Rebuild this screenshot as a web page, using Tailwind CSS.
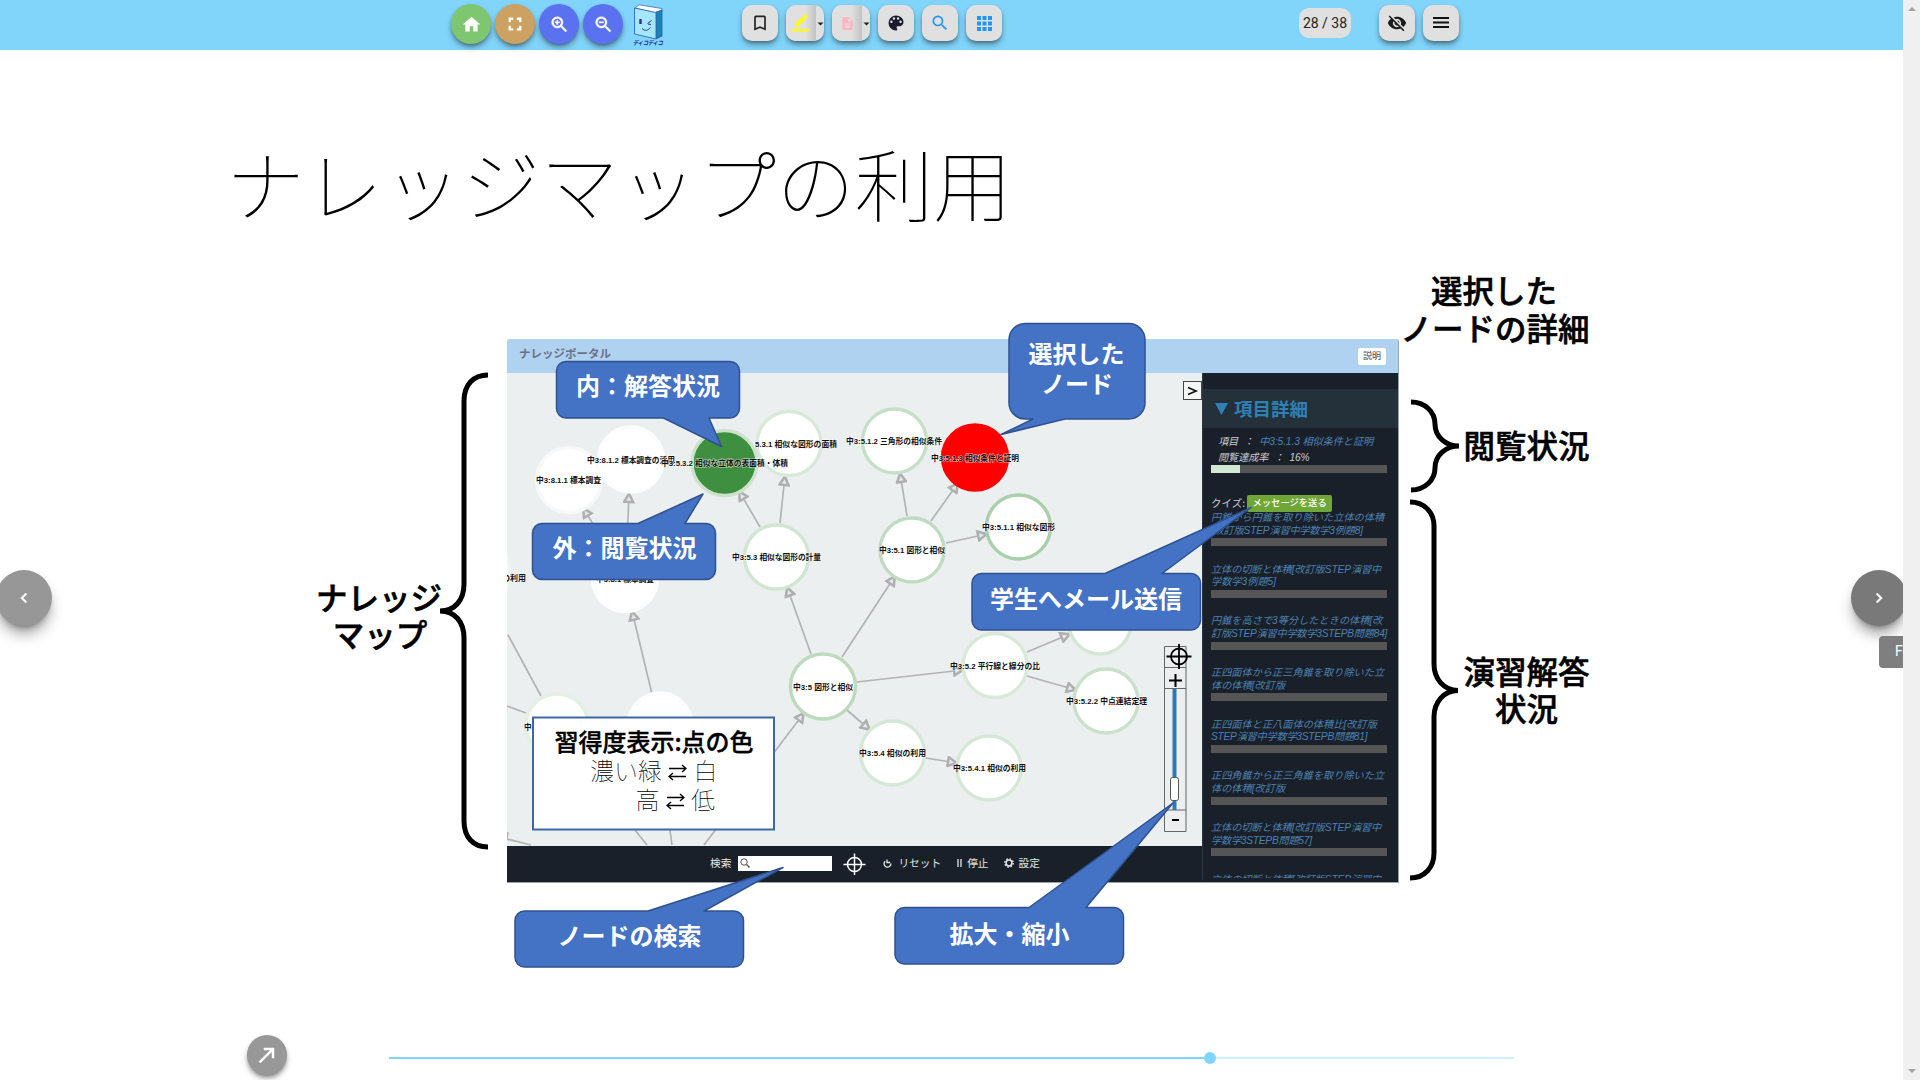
<!DOCTYPE html>
<html lang="ja">
<head>
<meta charset="utf-8">
<title>ナレッジマップの利用</title>
<script src="https://cdn.jsdelivr.net/npm/@tailwindcss/browser@4"></script>
</head>
<body class="h-screen overflow-hidden bg-white font-['Noto_Sans_CJK_JP',sans-serif]">
<div class="flex h-[1080px] w-[1920px]">
<div class="relative flex h-full w-[1903px] flex-col overflow-hidden">

<!-- toolbar -->
<header class="flex h-[50px] shrink-0 items-start bg-[#81d4fa] pl-[451px] pt-1">
  <div class="flex gap-1 text-white">
    <span class="grid size-10 place-items-center rounded-full bg-[#7fc671] shadow-md shadow-black/40"><svg class="size-[21px]" viewBox="0 0 24 24" fill="currentColor"><path d="M10 20v-6h4v6h5v-8h3L12 3 2 12h3v8z"/></svg></span>
    <span class="grid size-10 place-items-center rounded-full bg-[#cca162] shadow-md shadow-black/40"><svg class="size-[22px]" viewBox="0 0 24 24" fill="currentColor"><path d="M5 5h5v2.500H7.500V10H5zM14 5h5v5h-2.500V7.500H14zM5 14h2.500v2.500H10V19H5zM16.500 14H19v5h-5v-2.500h2.500z"/></svg></span>
    <span class="grid size-10 place-items-center rounded-full bg-[#5a72f0] shadow-md shadow-black/40"><svg class="size-[21px]" viewBox="0 0 24 24" fill="currentColor"><path d="M15.500 14h-.79l-.28-.27A6.471 6.471 0 0 0 16 9.500 6.500 6.500 0 1 0 9.500 16c1.610 0 3.090-.59 4.230-1.570l.27.28v.79l5 4.990L20.490 19l-4.990-5zm-6 0C7.010 14 5 11.990 5 9.500S7.010 5 9.500 5 14 7.010 14 9.500 11.990 14 9.500 14zM10.200 7H8.800v1.800H7v1.400h1.800V12h1.400v-1.800H12V8.800h-1.800z" stroke="currentColor" stroke-width=".5"/></svg></span>
    <span class="grid size-10 place-items-center rounded-full bg-[#5a72f0] shadow-md shadow-black/40"><svg class="size-[21px]" viewBox="0 0 24 24" fill="currentColor"><path d="M15.500 14h-.79l-.28-.27A6.471 6.471 0 0 0 16 9.500 6.500 6.500 0 1 0 9.500 16c1.610 0 3.090-.59 4.230-1.570l.27.28v.79l5 4.990L20.490 19l-4.990-5zm-6 0C7.010 14 5 11.990 5 9.500S7.010 5 9.500 5 14 7.010 14 9.500 11.990 14 9.500 14zM7 8.800h5v1.400H7z" stroke="currentColor" stroke-width=".5"/></svg></span>
  </div>
  <svg class="ml-2.5 h-[43px] w-8" viewBox="0 0 32 43">
    <path d="M2 4 6 .8 29 4.500v3L23 9z" fill="#fff" stroke="#3b6fc0" stroke-width=".8"/>
    <path d="M23 8l6-2v26l-6 3z" fill="#1784b4" stroke="#2b5fb0" stroke-width=".8"/>
    <path d="M1.500 4 23 8.500V35L1.500 30z" fill="#a5e6f8" stroke="#3565bd" stroke-width=".9"/>
    <path d="M7.500 15v5" stroke="#25318c" stroke-width="2.400"/><path d="M14.500 19.500l4-3M9 24.500c3 3 6 2 8.500-1M15 20l3 .5" fill="none" stroke="#25318c"/>
    <text x="0" y="41" font-size="6" font-weight="900" font-style="italic" fill="#2b3aa0" textLength="30" lengthAdjust="spacingAndGlyphs">ディコディコ</text>
  </svg>
  <div class="ml-[77px] mt-px flex gap-2">
    <span class="grid size-9 place-items-center rounded-[10px] bg-[#e0e0e0] shadow-md shadow-black/40"><svg class="size-5" viewBox="0 0 24 24" fill="#222"><path d="M17 3H7a2 2 0 0 0-2 2v16l7-3 7 3V5a2 2 0 0 0-2-2zm0 15-5-2.180L7 18V5h10z"/></svg></span>
    <span class="flex h-9 w-[38px] overflow-hidden rounded-[10px] bg-[#e0e0e0] shadow-md shadow-black/40"><span class="grid w-[30px] place-items-center bg-linear-to-r from-[#e0e0e0] from-65% to-[#c2c2c2]"><svg class="size-[18px]" viewBox="0 0 24 24" fill="#ff0"><path d="M17.750 7 14 3.250l-10 10V17h3.750zm2.960-2.960a1 1 0 0 0 0-1.410L18.370.29a1 1 0 0 0-1.410 0L15 2.250 18.750 6zM0 20h24v3H0z"/></svg></span><svg class="mt-[17px] h-1 w-2" viewBox="0 0 8 4"><path d="M1.500.5h6l-3 3z" fill="#222"/></svg></span>
    <span class="flex h-9 w-[38px] overflow-hidden rounded-[10px] bg-[#e0e0e0] shadow-md shadow-black/40"><span class="grid w-[30px] place-items-center bg-linear-to-r from-[#e0e0e0] from-65% to-[#c2c2c2]"><svg class="h-[13px] w-[11px]" viewBox="4 2 16 20" fill="#ffb6c1"><path d="M14 2H6a2 2 0 0 0-2 2v16c0 1.100.9 2 2 2h12a2 2 0 0 0 2-2V8zm2 16H8v-2h8zm0-4H8v-2h8zm-3-5V3.500L18.500 9z"/></svg></span><svg class="mt-[17px] h-1 w-2" viewBox="0 0 8 4"><path d="M1.500.5h6l-3 3z" fill="#222"/></svg></span>
    <span class="grid size-9 place-items-center rounded-[10px] bg-[#e0e0e0] shadow-md shadow-black/40"><svg class="size-5" viewBox="0 0 24 24" fill="#1c1b2e"><path d="M12 3a9 9 0 0 0 0 18c.83 0 1.500-.67 1.500-1.500 0-.39-.15-.74-.39-1.010-.23-.26-.38-.61-.38-.99 0-.83.67-1.500 1.500-1.500H16a5 5 0 0 0 5-5c0-4.420-4.030-8-9-8zm-5.500 9a1.500 1.500 0 1 1 0-3 1.500 1.500 0 0 1 0 3zm3-4a1.500 1.500 0 1 1 0-3 1.500 1.500 0 0 1 0 3zm5 0a1.500 1.500 0 1 1 0-3 1.500 1.500 0 0 1 0 3zm3 4a1.500 1.500 0 1 1 0-3 1.500 1.500 0 0 1 0 3z"/></svg></span>
    <span class="grid size-9 place-items-center rounded-[10px] bg-[#e0e0e0] shadow-md shadow-black/40"><svg class="size-5" viewBox="0 0 24 24" fill="#2196f3"><path d="M15.500 14h-.79l-.28-.27A6.471 6.471 0 0 0 16 9.500 6.500 6.500 0 1 0 9.500 16c1.610 0 3.090-.59 4.230-1.570l.27.28v.79l5 4.990L20.490 19l-4.990-5zm-6 0C7.010 14 5 11.990 5 9.500S7.010 5 9.500 5 14 7.010 14 9.500 11.990 14 9.500 14z"/></svg></span>
    <span class="grid size-9 place-items-center rounded-[10px] bg-[#e0e0e0] shadow-md shadow-black/40"><svg class="size-[15px]" viewBox="0 0 15 15" fill="#2196f3"><path d="M0 0h4v4H0zM5.500 0h4v4h-4zM11 0h4v4h-4zM0 5.500h4v4H0zM5.500 5.500h4v4h-4zM11 5.500h4v4h-4zM0 11h4v4H0zM5.500 11h4v4h-4zM11 11h4v4h-4z"/></svg></span>
  </div>
  <span class="ml-[297px] mt-1 grid h-[30px] w-[52px] place-items-center rounded-[10px] bg-[#e0e0e0] font-['Roboto',sans-serif] text-sm text-[#222]">28 / 38</span>
  <div class="ml-7 mt-px flex gap-2">
    <span class="grid size-9 place-items-center rounded-[10px] bg-[#e0e0e0] shadow-md shadow-black/40"><svg class="size-5" viewBox="0 0 24 24" fill="#1a1a1a"><path d="M12 7a5 5 0 0 1 4.640 6.830l2.920 2.920A11.800 11.800 0 0 0 22.990 12C21.260 7.610 16.990 4.500 11.990 4.500c-1.400 0-2.740.25-3.980.7l2.160 2.160A4.900 4.900 0 0 1 12 7zM2 4.270l2.740 2.740A11.800 11.800 0 0 0 1 12c1.730 4.390 6 7.500 11 7.500 1.550 0 3.030-.3 4.380-.84l.42.42L19.730 22 21 20.730 3.270 3zM7.530 9.800l1.550 1.550A3 3 0 0 0 12 15c.22 0 .44-.03.65-.08l1.550 1.550A5 5 0 0 1 7.530 9.800zm4.310-.78 3.150 3.150.02-.16a3 3 0 0 0-3-3z"/></svg></span>
    <span class="grid size-9 place-items-center rounded-[10px] bg-[#e0e0e0] shadow-md shadow-black/40"><svg class="h-3 w-4" viewBox="0 0 16 12"><path d="M0 1h16M0 5.500h16M0 10h16" stroke="#111" stroke-width="2"/></svg></span>
  </div>
</header>

<main class="relative flex-1">
  <h1 class="pl-[226px] pt-[75px] text-[78.6px] leading-[114px] font-thin text-black">ナレッジマップの利用</h1>

  <!-- knowledge portal window -->
  <section class="absolute left-[507px] top-[289px] flex h-[544px] w-[892px] flex-col overflow-hidden rounded-t-[3px] border-r border-b border-[#9aa3aa] bg-[#ebefef]">
    <div class="flex h-[34px] shrink-0 items-center justify-between bg-[#aed2f0] pl-3 pr-3">
      <span class="-mt-1 text-[11.500px] font-bold text-[#6d7089]">ナレッジポータル</span>
      <span class="grid h-[17px] w-7 place-items-center rounded-xs bg-white text-[9px] text-[#444]">説明</span>
    </div>
    <div class="flex min-h-0 flex-1">
      <div class="flex w-[695px] flex-col">
        <svg class="h-[473px] w-[695px]" viewBox="507 373 695 473">
          <defs><marker id="tip" viewBox="0 0 12 12" refX="10.500" refY="6" markerWidth="12" markerHeight="12" markerUnits="userSpaceOnUse" orient="auto"><path d="M1.500 1.500 10 6l-8.500 4.500z" fill="#e4e8e8" stroke="#afafaf" stroke-width="2.500"/></marker></defs>
          <g id="edges" fill="none" stroke="#b3b3b3" stroke-width="1.700"></g>
          <g id="nodes"></g>
          <g id="names" font-family="Liberation Sans, Noto Sans CJK JP, sans-serif" font-size="7.900" font-weight="700" fill="#111" stroke="#fff" stroke-opacity=".65" stroke-width="1.200" paint-order="stroke" text-anchor="middle"></g>
          <rect x="1183.500" y="381.500" width="18" height="18" fill="#f4f6f6" stroke="#444"/><path d="M1188 387.500l8 3.500-8 3.500" fill="none" stroke="#111" stroke-width="1.700"/>
          <g fill="none" stroke="#666"><path d="M1164.500 646.500h21.500v185h-21.500zM1164.500 667.500h21.500M1164.500 688.500h21.500M1164.500 810h21.500"/></g>
          <path d="M1174.500 689v121" stroke="#2f79b3" stroke-width="4"/>
          <rect x="1170.500" y="777.500" width="8" height="23" rx="2" fill="#fff" stroke="#555"/>
          <g fill="none" stroke="#000" stroke-width="1.800"><circle cx="1179" cy="656.500" r="8"/><path d="M1166.500 656.500h25M1179 644v25"/><path d="M1169 680.500h13M1175.500 674v13M1172 820h7" stroke-width="2"/></g>
        </svg>
        <div class="flex flex-1 items-center bg-[#1a2029] pb-0.5 pl-[203px] text-[10.700px] leading-none text-[#e4e6e8]">
          <span>検索</span>
          <span class="ml-[7px] flex h-[15px] w-[94px] items-center bg-white pl-0.5"><svg class="size-[10px]" viewBox="0 0 10 10" fill="none" stroke="#555"><circle cx="4" cy="4" r="3.200"/><path d="M6.500 6.500 9.500 9.500" stroke-width="1.400"/></svg></span>
          <svg class="ml-[11px] size-[23px]" viewBox="0 0 23 23" fill="none" stroke="#fff" stroke-width="1.500"><circle cx="11.500" cy="12.500" r="7"/><path d="M.5 12.500h22M11.500 1.500v21.500"/></svg>
          <svg class="ml-[17px] size-[9px]" viewBox="0 0 9 9" fill="none" stroke="#e4e6e8" stroke-width="1.300"><path d="M2.200 2.200A3.400 3.400 0 1 0 7.900 4.600M4 .5v3h3.200"/></svg>
          <span class="ml-1.5">リセット</span>
          <svg class="ml-4 h-2 w-[5px]" viewBox="0 0 5 8"><path d="M1 0v8M4 0v8" stroke="#c9ccd0" stroke-width="1.500"/></svg>
          <span class="ml-[5px]">停止</span>
          <svg class="ml-[15px] size-[10px]" viewBox="0 0 10 10" fill="none" stroke="#e4e6e8"><circle cx="5" cy="5" r="2.900" stroke-width="1.500"/><circle cx="5" cy="5" r="4.200" stroke-width="1.400" stroke-dasharray="1.600 1.700"/></svg>
          <span class="ml-[5px]">設定</span>
        </div>
      </div>
      <aside class="flex min-w-0 flex-1 flex-col overflow-hidden border-b-4 border-l border-b-[#1a2029] border-l-[#26384a] bg-[#1a2029] pt-4">
        <h2 class="flex h-[39px] shrink-0 items-center bg-[#24313b] pl-3 text-[18.500px] leading-none font-bold text-[#2f80b5]"><svg class="mr-1.5 h-3 w-[13px]" viewBox="0 0 13 12"><path d="M0 0h13L6.500 12z" fill="#2f80b5"/></svg>項目詳細</h2>
        <div class="mt-1.5 flex h-4 shrink-0 items-center pl-[15px] font-['Liberation_Sans','Noto_Sans_CJK_JP',sans-serif] text-[10.200px] tracking-[-0.1px] whitespace-pre text-[#c9ccd0] italic">項目  ：  <span class="text-[#4c82b5]">中3:5.1.3 相似条件と証明</span></div>
        <div class="flex h-4 shrink-0 items-center pl-[15px] font-['Liberation_Sans','Noto_Sans_CJK_JP',sans-serif] text-[10.200px] tracking-[-0.1px] whitespace-pre text-[#c9ccd0] italic">閲覧達成率  ：  16%</div>
        <div class="-mt-px ml-2 h-2 w-44 shrink-0 bg-[#555]"><div class="h-full w-[29px] bg-[#d3e8d3]"></div></div>
        <div class="mt-[21px] ml-2 flex h-[18px] shrink-0 items-center gap-0.5 text-[10.500px] leading-none text-[#c9ccd0]">クイズ:<span class="grid h-[17px] w-[85px] place-items-center rounded-xs bg-[#6fa637] text-[9.300px] font-medium text-white">メッセージを送る</span></div>
        <div class="ml-2 flex shrink-0 flex-col gap-[17px] font-['Liberation_Sans','Noto_Sans_CJK_JP',sans-serif] text-[10.200px] leading-[12.600px] whitespace-nowrap text-[#4c80b0] italic">
          <div class="h-[34.700px]">円錐から円錐を取り除いた立体の体積<br><span class="tracking-[-0.2px]">[改訂版STEP演習中学数学3例題8]</span><div class="mt-px h-2 w-44 bg-[#555]"></div></div>
          <div class="h-[34.700px]"><span class="tracking-[-0.1px]">立体の切断と体積[改訂版STEP演習中</span><br>学数学3例題5]<div class="mt-px h-2 w-44 bg-[#555]"></div></div>
          <div class="h-[34.700px]">円錐を高さで3等分したときの体積[改<br><span class="tracking-[-0.24px]">訂版STEP演習中学数学3STEPB問題84]</span><div class="mt-px h-2 w-44 bg-[#555]"></div></div>
          <div class="h-[34.700px]">正四面体から正三角錐を取り除いた立<br>体の体積[改訂版<div class="mt-px h-2 w-44 bg-[#555]"></div></div>
          <div class="h-[34.700px]">正四面体と正八面体の体積比[改訂版<br><span class="tracking-[-0.24px]">STEP演習中学数学3STEPB問題81]</span><div class="mt-px h-2 w-44 bg-[#555]"></div></div>
          <div class="h-[34.700px]">正四角錐から正三角錐を取り除いた立<br>体の体積[改訂版<div class="mt-px h-2 w-44 bg-[#555]"></div></div>
          <div class="h-[34.700px]"><span class="tracking-[-0.1px]">立体の切断と体積[改訂版STEP演習中</span><br><span class="tracking-[-0.24px]">学数学3STEPB問題57]</span><div class="mt-px h-2 w-44 bg-[#555]"></div></div>
          <div class="h-[34.700px]"><span class="tracking-[-0.1px]">立体の切断と体積[改訂版STEP演習中</span></div>
        </div>
      </aside>
    </div>
  </section>

  <!-- annotations on the slide canvas -->
  <svg class="pointer-events-none absolute left-0 top-0 h-[1030px] w-[1903px]" viewBox="0 50 1903 1030" font-family="Noto Sans CJK JP, sans-serif">
    <g fill="none" stroke="#000" stroke-width="5">
      <path d="M488 375c-15 0-24 10-24 26V584c0 16-9 27-24 27 15 0 24 11 24 27V821c0 16 9 26 24 26"/>
      <path d="M1411 402c14 0 24 10 24 22 0 13 11 22 24 22-13 0-24 9-24 22 0 12-10 22-24 22"/>
      <path d="M1410 502c15 0 24 11 24 24V664c0 15 10 26.500 24 26.500-14 0-24 11.500-24 26.500V853c0 14-9 25-24 25"/>
    </g>
    <g fill="#4472c4" stroke="#2f528f" stroke-width="1.500" stroke-linejoin="round">
      <path d="M566 361.500H730a9.500 9.500 0 0 1 9.500 9.500V408.500a9.500 9.500 0 0 1-9.500 9.500H709L721.500 446.500 663.500 418H566a9.500 9.500 0 0 1-9.500-9.500V371a9.500 9.500 0 0 1 9.500-9.500z"/>
      <path d="M542 523.500H638L703 494 685 523.500H706a9.500 9.500 0 0 1 9.500 9.500V570a9.500 9.500 0 0 1-9.500 9.500H542a9.500 9.500 0 0 1-9.500-9.500V533a9.500 9.500 0 0 1 9.500-9.500z"/>
      <path d="M1025 323.500H1129a16 16 0 0 1 16 16V403a16 16 0 0 1-16 16H1065L1001 434.500 1033 419H1025a16 16 0 0 1-16-16V339.500a16 16 0 0 1 16-16z"/>
      <path d="M981.500 573.500H1105L1251 507.500 1162 573.500H1191a9.500 9.500 0 0 1 9.500 9.500V620.500a9.500 9.500 0 0 1-9.500 9.500H981.500a9.500 9.500 0 0 1-9.500-9.500V583a9.500 9.500 0 0 1 9.500-9.500z"/>
      <path d="M524.500 911H648L783 867.500 704 911H734a9.500 9.500 0 0 1 9.500 9.500V957.500a9.500 9.500 0 0 1-9.500 9.500H524.500a9.500 9.500 0 0 1-9.500-9.500V920.500a9.500 9.500 0 0 1 9.500-9.500z"/>
      <path d="M904.500 907.500H1029L1173 803 1086 907.500H1114a9.500 9.500 0 0 1 9.500 9.500V954.500a9.500 9.500 0 0 1-9.500 9.500H904.500a9.500 9.500 0 0 1-9.500-9.500V917a9.500 9.500 0 0 1 9.500-9.500z"/>
    </g>
    <g fill="#fff" font-size="24" font-weight="700" text-anchor="middle">
      <text x="648" y="395">内：解答状況</text><text x="624.500" y="557">外：閲覧状況</text>
      <text x="1076.500" y="363">選択した</text><text x="1077" y="393">ノード</text>
      <text x="1086" y="608">学生へメール送信</text><text x="629.500" y="945">ノードの検索</text><text x="1009.500" y="943">拡大・縮小</text>
    </g>
    <rect x="533" y="717.500" width="241" height="112" fill="#fff" stroke="#3f66a5" stroke-width="2"/>
    <text x="654" y="750.500" font-size="24" font-weight="500" text-anchor="middle" stroke="#000" stroke-width=".4">習得度表示:点の色</text>
    <g font-size="24" font-weight="100"><text x="590" y="780">濃い緑</text><text x="693.500" y="780">白</text><text x="635.500" y="809">高</text><text x="691" y="809">低</text></g>
    <g fill="none" stroke="#000" stroke-width="1.300"><path d="M669 768.500h17m-4-3.500 4 3.500-4 3.500M686 776.500h-17m4-3.500-4 3.500 4 3.500"/><path d="M667 797.500h17m-4-3.500 4 3.500-4 3.500M684 805.500h-17m4-3.500-4 3.500 4 3.500"/></g>
    <g font-size="31.500" font-weight="500" text-anchor="middle" stroke="#000" stroke-width=".6">
      <text x="1494" y="302.500">選択した</text><text x="1495" y="340.500">ノードの詳細</text><text x="1526.500" y="457.500">閲覧状況</text>
      <text x="1526.500" y="683.500">演習解答</text><text x="1526.500" y="720.500">状況</text>
      <text x="379" y="609.500">ナレッジ</text><text x="380" y="646.500">マップ</text>
    </g>
  </svg>

  <!-- page navigation -->
  <span class="absolute -left-1 top-[520px] grid size-14 place-items-center rounded-full bg-[#979797] shadow-lg shadow-black/40"><svg class="size-5 text-white" viewBox="0 0 24 24" fill="currentColor" stroke="currentColor" stroke-width=".6"><path d="M15.410 7.410 14 6l-6 6 6 6 1.410-1.410L10.830 12z"/></svg></span>
  <span class="absolute left-[1851px] top-[520px] grid size-14 place-items-center rounded-full bg-[#797979] shadow-lg shadow-black/40"><svg class="size-5 text-white" viewBox="0 0 24 24" fill="currentColor" stroke="currentColor" stroke-width=".6"><path d="M8.590 16.590 10 18l6-6-6-6-1.410 1.410L13.170 12z"/></svg></span>
  <span class="absolute left-[1879px] top-[586px] h-8 w-[90px] rounded bg-[#7f7f7f] pl-4 font-['Roboto',sans-serif] text-sm leading-[31px] text-white">Forward</span>
</main>

<footer class="absolute bottom-0 left-0 flex h-[50px] w-full items-center pl-[247px]">
  <span class="grid size-10 shrink-0 place-items-center rounded-full bg-[#989898] shadow-md shadow-black/40"><svg class="size-6 text-white" viewBox="0 0 24 24" fill="currentColor" stroke="currentColor" stroke-width=".5"><path d="M9 5v2h6.590L4 18.590 5.410 20 17 8.410V15h2V5z"/></svg></span>
  <div class="ml-[102px] mt-[6px] flex w-[1125px] items-center">
    <div class="h-0.5 w-[815px] bg-[#81d4fa]"></div>
    <div class="size-3 rounded-full bg-[#81d4fa]"></div>
    <div class="h-0.5 flex-1 bg-[#cdeefd]"></div>
  </div>
</footer>
</div>

<!-- page scrollbar -->
<div class="flex h-full w-[17px] flex-col items-center justify-between bg-[#f0f0f0] py-1.5">
  <svg class="h-1.5 w-2" viewBox="0 0 8 6"><path d="M0 5 4 1l4 4z" fill="#a3a3a3"/></svg>
  <svg class="h-1.5 w-2" viewBox="0 0 8 6"><path d="M0 1l4 4 4-4z" fill="#a3a3a3"/></svg>
</div>
</div>

<script>
const NS = 'http://www.w3.org/2000/svg';
function add(parent, tag, attrs, text) {
  const el = document.createElementNS(NS, tag);
  for (const k in attrs) el.setAttribute(k, attrs[k]);
  if (text) el.textContent = text;
  document.getElementById(parent).appendChild(el);
}
// [x1, y1, x2, y2, has arrow tip]
[[907,516,900,473,1],[931,521,958,483,1],[946,543,987,534,1],[760,527,739,491,1],[780,523,785,476,1],
 [811,654,787,587,1],[842,657,895,576,1],[857,682,963,670,1],[847,710,870,730,1],[926,758,957,763,1],
 [1027,652,1070,634,1],[1027,676,1076,690,1],[704,845,804,713,1],[600,535,583,508,1],[627,545,629,493,1],
 [652,694,632,611,1],[508,635,541,696,0],[507,706,526,713,0],[507,839,531,845,0],[507,838,508,832,0],
 [635,830,647,845,0],[670,830,672,845,0]
].forEach(e => add('edges', 'line', Object.assign({x1: e[0], y1: e[1], x2: e[2], y2: e[3]}, e[4] ? {'marker-end': 'url(#tip)'} : {})));
// [cx, cy, radius, fill, ring]
[[477,572,33,'#fff','#eef4ee'],[569,480,32.5,'#fff','#f7f9f8'],[631,459.5,32.5,'#fff','#fcfdfd'],[789,443.5,32,'#fff','#d8e9d8'],
 [724.5,463,32.5,'#3f8f40','#cde2cc'],[894.5,441,32,'#fff','#c6dfc7'],[975,457.5,32.5,'#f00','#f00'],[1018.5,527,32,'#fff','#a9cfab'],
 [912,550,32,'#fff','#bfdcc0'],[776.5,557,32,'#fff','#d0e6d1'],[625,579,32.5,'#fff','#fcfdfd'],[823,686.5,32.5,'#fff','#bddabd'],
 [995,665.5,32,'#fff','#d8e9d8'],[1100,623,31,'#fff','#d3e7d4'],[1106,701,32,'#fff','#c9e1ca'],[892.5,753,32,'#fff','#d5e7d6'],
 [989,768,32,'#fff','#d5e7d6'],[557,725,31,'#fff','#e4f0e3'],[660,725,32,'#fff','#fafdfb']
].forEach(n => add('nodes', 'circle', {cx: n[0], cy: n[1], r: n[2], fill: n[3], stroke: n[4], 'stroke-width': 3.4}));
// [left, right, centre y, label]
[[536,601,480.5,'中3:8.1.1 標本調査'],[587,675,460.5,'中3:8.1.2 標本調査の活用'],[755,837,444.5,'5.3.1 相似な図形の面積'],[661,788,463.5,'中3:5.3.2 相似な立体の表面積・体積'],
 [846,942,441.5,'中3:5.1.2 三角形の相似条件'],[931,1019,458,'中3:5.1.3 相似条件と証明'],[982,1055,527.5,'中3:5.1.1 相似な図形'],[879,945,550.5,'中3:5.1 図形と相似'],
 [732,821,557.5,'中3:5.3 相似な図形の計量'],[596,654,579,'中3:8.1 標本調査'],[793,853,687,'中3:5 図形と相似'],[950,1040,666,'中3:5.2 平行線と線分の比'],
 [1066,1147,701.5,'中3:5.2.2 中点連結定理'],[859,926,753.5,'中3:5.4 相似の利用'],[953,1026,768.5,'中3:5.4.1 相似の利用'],[502,526,578.5,'の利用'],[524,590,727,'中3:7 三平方の定理']
].forEach(t => add('names', 'text', {x: (t[0] + t[1]) / 2, y: t[2] + 2.8, textLength: t[1] - t[0], lengthAdjust: 'spacingAndGlyphs'}, t[3]));
</script>
</body>
</html>
